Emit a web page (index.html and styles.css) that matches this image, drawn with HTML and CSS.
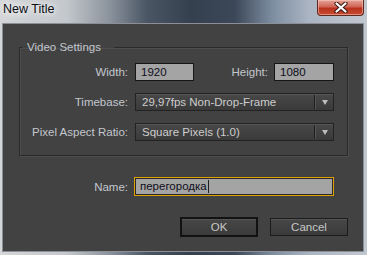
FILE: index.html
```html
<!DOCTYPE html>
<html>
<head>
<meta charset="utf-8">
<link rel="stylesheet" href="styles.css">
</head>
<body>
<div class="window">
  <div class="titlebar">
    <span class="title">New Title</span>
    <div class="close">
      <svg width="14" height="11" viewBox="0 0 14 11">
        <path d="M2.5 1.5 L11.5 9.5 M11.5 1.5 L2.5 9.5" stroke="#3a1a14" stroke-width="4.2" stroke-linecap="round"/>
        <path d="M2.5 1.5 L11.5 9.5 M11.5 1.5 L2.5 9.5" stroke="#ffffff" stroke-width="2.2" stroke-linecap="round"/>
      </svg>
    </div>
  </div>
  <div class="dialog">
    <fieldset class="group">
      <legend class="legend">Video Settings</legend>
      <div class="row">
        <span class="lbl">Width:</span>
        <div class="field fw">1920</div>
        <span class="lbl2">Height:</span>
        <div class="field fh">1080</div>
      </div>
      <div class="row">
        <span class="lbl">Timebase:</span>
        <div class="select">
          <span class="select-text">29,97fps Non-Drop-Frame</span>
          <span class="select-btn"><span class="arrow"></span></span>
        </div>
      </div>
      <div class="row last">
        <span class="lbl">Pixel Aspect Ratio:</span>
        <div class="select">
          <span class="select-text">Square Pixels (1.0)</span>
          <span class="select-btn"><span class="arrow"></span></span>
        </div>
      </div>
    </fieldset>
    <div class="row name-row">
      <span class="lbl">Name:</span>
      <div class="field name">перегородка<span class="caret"></span></div>
    </div>
    <div class="buttons">
      <div class="btn ok">OK</div>
      <div class="btn cancel">Cancel</div>
    </div>
  </div>
</div>
</body>
</html>
```
FILE: styles.css
```css
html, body {
  margin: 0;
  padding: 0;
}
body {
  width: 367px;
  height: 255px;
  overflow: hidden;
  font-family: "Liberation Sans", Arial, sans-serif;
  background: linear-gradient(to right, #d4d6d8 0%, #c4c8cc 18%, #8a929c 30%, #4a5664 40%, #34404e 52%, #3c4858 64%, #7c8ca0 74%, #aab4c2 84%, #c2c8d0 100%);
}
.window {
  display: flex;
  flex-direction: column;
  height: 255px;
  padding: 0 3px 3px 2px;
  box-sizing: border-box;
}
.titlebar {
  height: 23px;
  display: flex;
  justify-content: space-between;
  align-items: flex-start;
}
.title {
  font-size: 12.5px;
  line-height: 15px;
  padding: 2px 0 0 1px;
  color: #0c0c14;
  text-shadow: 0 0 6px #ffffff, 0 0 10px #ffffff;
}
.close {
  width: 47px;
  height: 16px;
  box-sizing: border-box;
  border: 1px solid #5e2a22;
  border-top: none;
  border-radius: 0 0 4px 4px;
  background: linear-gradient(#e4a498 0%, #d06454 45%, #b8321e 55%, #c84a30 100%);
  box-shadow: inset 0 0 0 1px rgba(255, 210, 200, 0.5);
  display: flex;
  align-items: center;
  justify-content: center;
}
.close svg {
  display: block;
}
.dialog {
  flex: 1;
  background: #424242;
  border: 1px solid #8c9096;
  padding: 16px 15px 0 16px;
  display: flex;
  flex-direction: column;
}
.group {
  margin: 0;
  border: 1px solid #2a2a2a;
  box-shadow: 1px 1px 0 #4e4e4e, inset 1px 1px 0 #4e4e4e;
  padding: 9px 13px 14px 0;
  min-width: 0;
}
.legend {
  font-size: 11.5px;
  line-height: 14px;
  color: #c3c7ce;
  padding: 0 13px 0 5px;
  margin-left: 2px;
}
.row {
  display: flex;
  align-items: center;
  height: 18px;
  margin-bottom: 12px;
}
.row.last {
  margin-bottom: 0;
}
.lbl {
  width: 108px;
  text-align: right;
  margin-right: 7px;
  font-size: 11.5px;
  color: #c3c7ce;
  flex: none;
}
.lbl2 {
  margin-left: auto;
  margin-right: 6px;
  font-size: 11.5px;
  color: #c3c7ce;
}
.field {
  height: 18px;
  box-sizing: border-box;
  background: #a4a4a4;
  border: 1px solid #161616;
  font-size: 11.5px;
  line-height: 16px;
  color: #0e0e1a;
  padding-left: 5px;
}
.fw {
  width: 59px;
}
.fh {
  width: 60px;
}
.select {
  flex: 1;
  height: 18px;
  box-sizing: border-box;
  display: flex;
  border: 1px solid #222222;
  background: linear-gradient(#484848, #3a3a3a);
  box-shadow: inset 0 1px 0 #555555;
}
.select-text {
  flex: 1;
  font-size: 11.5px;
  line-height: 16px;
  color: #cdcdcd;
  padding-left: 6px;
}
.select-btn {
  width: 18px;
  margin: 1px 0;
  border-left: 1px solid #1e1e1e;
  box-shadow: inset 1px 0 0 #555555;
  display: flex;
  align-items: center;
  justify-content: center;
}
.arrow {
  width: 0;
  height: 0;
  border-left: 3.5px solid transparent;
  border-right: 3.5px solid transparent;
  border-top: 5px solid #bdbdbd;
  margin-left: 1px;
}
.name-row {
  margin: 21px 14px 0 1px;
  height: 19px;
}
.name-row .lbl {
  margin-right: 6px;
}
.field.name {
  flex: 1;
  height: 19px;
  border: 1px solid #e0a000;
  box-shadow: inset 0 0 0 1px #2a2a2a;
  line-height: 17px;
  padding-left: 5px;
  display: flex;
  align-items: center;
}
.caret {
  display: inline-block;
  width: 1px;
  height: 13px;
  background: #202020;
  margin-left: 1px;
}
.buttons {
  display: flex;
  justify-content: flex-end;
  align-items: center;
  gap: 12px;
  margin-top: 21px;
  height: 20px;
}
.btn {
  width: 78px;
  box-sizing: border-box;
  background: linear-gradient(#474747, #3a3a3a);
  color: #c8c8c8;
  font-size: 11.5px;
  display: flex;
  align-items: center;
  justify-content: center;
}
.ok {
  height: 20px;
  border: 2px solid #121212;
  box-shadow: inset 0 1px 0 #555555;
}
.cancel {
  height: 18px;
  border: 1px solid #1c1c1c;
  box-shadow: inset 0 1px 0 #555555;
}
```
